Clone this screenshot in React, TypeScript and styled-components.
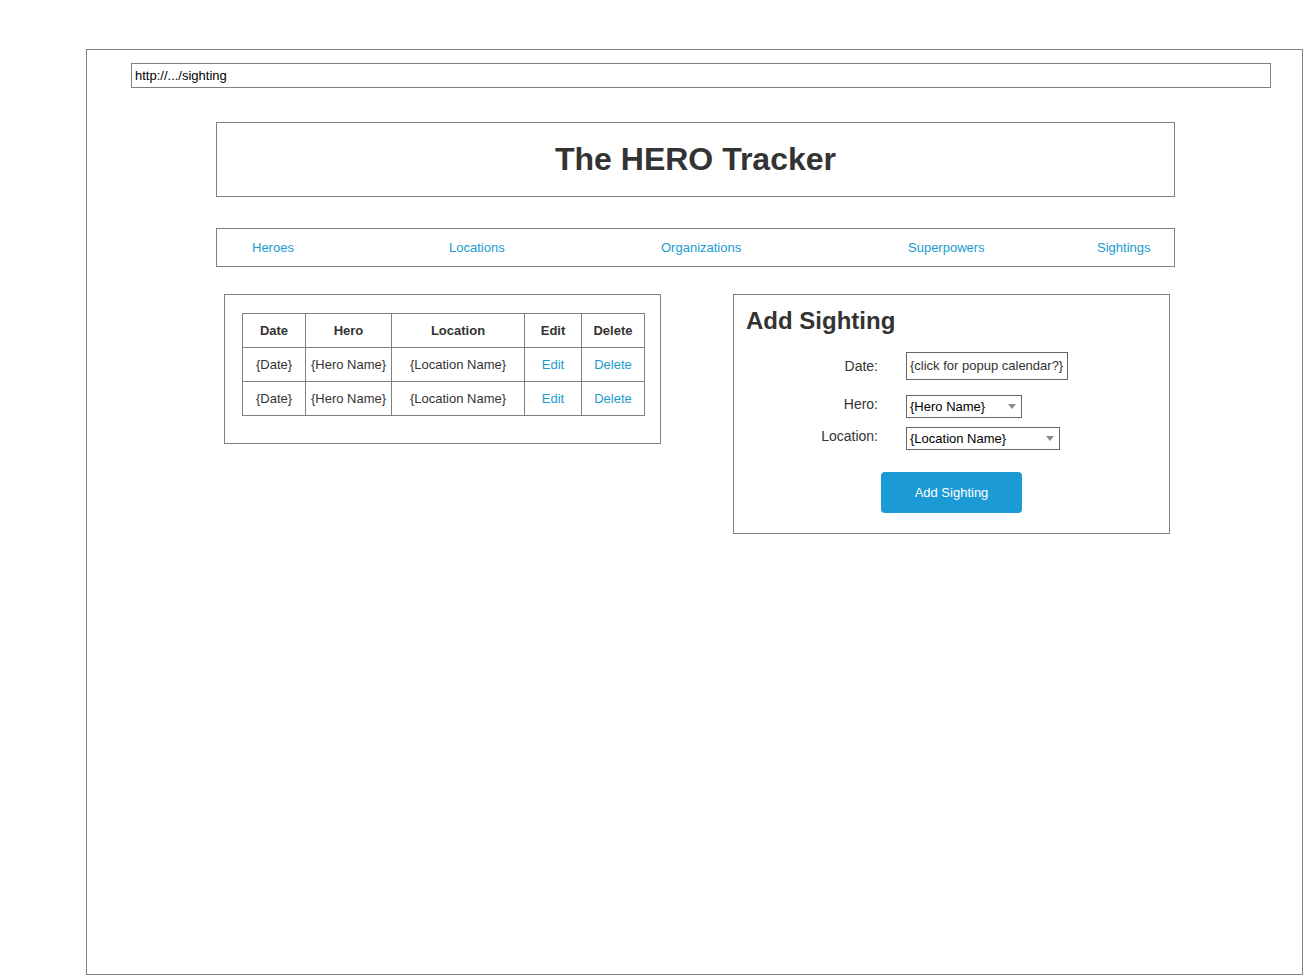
import styled, { createGlobalStyle } from "styled-components";

const GlobalStyle = createGlobalStyle`
  html, body {
    margin: 0;
    padding: 0;
    background: #ffffff;
    font-family: "Liberation Sans", Arial, sans-serif;
    color: #333333;
  }
`;

const Frame = styled.div`
  box-sizing: border-box;
  margin: 49px 0 0 86px;
  width: 1217px;
  height: 926px;
  border: 1px solid #808080;
  padding: 13px 0 0 44px;
`;

const UrlBar = styled.div`
  box-sizing: border-box;
  width: 1140px;
  height: 25px;
  border: 1px solid #808080;
  padding: 0 3px;
  font-size: 13px;
  line-height: 23px;
  color: #000000;
`;

const Content = styled.div`
  width: 959px;
  margin: 34px 0 0 85px;
`;

const Header = styled.header`
  box-sizing: border-box;
  height: 75px;
  border: 1px solid #808080;
  display: flex;
  align-items: center;
  justify-content: center;
`;

const Title = styled.h1`
  margin: 0;
  font-size: 32px;
  font-weight: bold;
  color: #333333;
`;

const Nav = styled.nav`
  box-sizing: border-box;
  height: 39px;
  margin-top: 31px;
  border: 1px solid #808080;
  padding: 0 0 1px 35px;
  display: grid;
  grid-template-columns: 197px 212px 247px 189px auto;
  align-items: center;
`;

const NavLink = styled.a`
  font-size: 13px;
  color: #1a9bd0;
  text-decoration: none;
`;

const Panels = styled.div`
  display: flex;
  align-items: flex-start;
  margin-top: 27px;
  padding-left: 8px;
  gap: 72px;
`;

const Panel = styled.section<{ $height: number }>`
  box-sizing: border-box;
  width: 437px;
  height: ${(p) => p.$height}px;
  border: 1px solid #808080;
`;

const TablePanel = styled(Panel)`
  padding: 18px 0 0 17px;
`;

const Table = styled.table`
  border-collapse: collapse;
  font-size: 13px;
  color: #333333;
  table-layout: fixed;
`;

const Th = styled.th<{ $w: number }>`
  width: ${(p) => p.$w}px;
  height: 33px;
  padding: 0;
  border: 1px solid #808080;
  font-weight: bold;
  text-align: center;
`;

const Td = styled.td`
  height: 33px;
  padding: 0;
  border: 1px solid #808080;
  text-align: center;
`;

const TableLink = styled.a`
  color: #1a9bd0;
  text-decoration: none;
`;

const FormPanel = styled(Panel)`
  padding: 12px 0 0 12px;
  display: flex;
  flex-direction: column;
`;

const FormTitle = styled.h2`
  margin: 0;
  font-size: 24px;
  font-weight: bold;
  color: #333333;
`;

const Row = styled.div<{ $top: number }>`
  display: flex;
  align-items: center;
  margin-top: ${(p) => p.$top}px;
`;

const Label = styled.label<{ $raise?: boolean }>`
  width: 132px;
  margin-right: 28px;
  text-align: right;
  font-size: 14px;
  color: #333333;
  padding-bottom: ${(p) => (p.$raise ? 6 : 0)}px;
`;

const DateInput = styled.div`
  box-sizing: border-box;
  width: 162px;
  height: 28px;
  border: 1px solid #666666;
  padding: 0 3px;
  font-size: 13px;
  line-height: 26px;
  color: #333333;
  white-space: nowrap;
`;

const Select = styled.div<{ $w: number }>`
  box-sizing: border-box;
  width: ${(p) => p.$w}px;
  height: 23px;
  border: 1px solid #666666;
  padding: 0 5px 0 3px;
  display: flex;
  align-items: center;
  justify-content: space-between;
  font-size: 13px;
  color: #000000;
`;

const Caret = styled.span`
  width: 0;
  height: 0;
  border-left: 4px solid transparent;
  border-right: 4px solid transparent;
  border-top: 5px solid #8a8a8a;
`;

const Button = styled.button`
  align-self: center;
  margin: 22px 0 0 -12px;
  width: 141px;
  height: 41px;
  border: none;
  border-radius: 4px;
  background: #1b9ad6;
  color: #ffffff;
  font-family: "Liberation Sans", Arial, sans-serif;
  font-size: 13px;
`;

const columns = [
  { name: "Date", w: 62 },
  { name: "Hero", w: 85 },
  { name: "Location", w: 132 },
  { name: "Edit", w: 56 },
  { name: "Delete", w: 62 },
];

const sightings = [
  { date: "{Date}", hero: "{Hero Name}", location: "{Location Name}" },
  { date: "{Date}", hero: "{Hero Name}", location: "{Location Name}" },
];

const links = ["Heroes", "Locations", "Organizations", "Superpowers", "Sightings"];

export default function App() {
  return (
    <>
      <GlobalStyle />
      <Frame>
        <UrlBar>http://.../sighting</UrlBar>
        <Content>
          <Header>
            <Title>The HERO Tracker</Title>
          </Header>
          <Nav>
            {links.map((l) => (
              <div key={l}>
                <NavLink href="#">{l}</NavLink>
              </div>
            ))}
          </Nav>
          <Panels>
            <TablePanel $height={150}>
              <Table>
                <thead>
                  <tr>
                    {columns.map((c) => (
                      <Th key={c.name} $w={c.w}>
                        {c.name}
                      </Th>
                    ))}
                  </tr>
                </thead>
                <tbody>
                  {sightings.map((s, i) => (
                    <tr key={i}>
                      <Td>{s.date}</Td>
                      <Td>{s.hero}</Td>
                      <Td>{s.location}</Td>
                      <Td>
                        <TableLink href="#">Edit</TableLink>
                      </Td>
                      <Td>
                        <TableLink href="#">Delete</TableLink>
                      </Td>
                    </tr>
                  ))}
                </tbody>
              </Table>
            </TablePanel>
            <FormPanel $height={240}>
              <FormTitle>Add Sighting</FormTitle>
              <Row $top={17}>
                <Label>Date:</Label>
                <DateInput>{"{click for popup calendar?}"}</DateInput>
              </Row>
              <Row $top={15}>
                <Label $raise>Hero:</Label>
                <Select $w={116}>
                  <span>{"{Hero Name}"}</span>
                  <Caret />
                </Select>
              </Row>
              <Row $top={9}>
                <Label $raise>Location:</Label>
                <Select $w={154}>
                  <span>{"{Location Name}"}</span>
                  <Caret />
                </Select>
              </Row>
              <Button>Add Sighting</Button>
            </FormPanel>
          </Panels>
        </Content>
      </Frame>
    </>
  );
}
